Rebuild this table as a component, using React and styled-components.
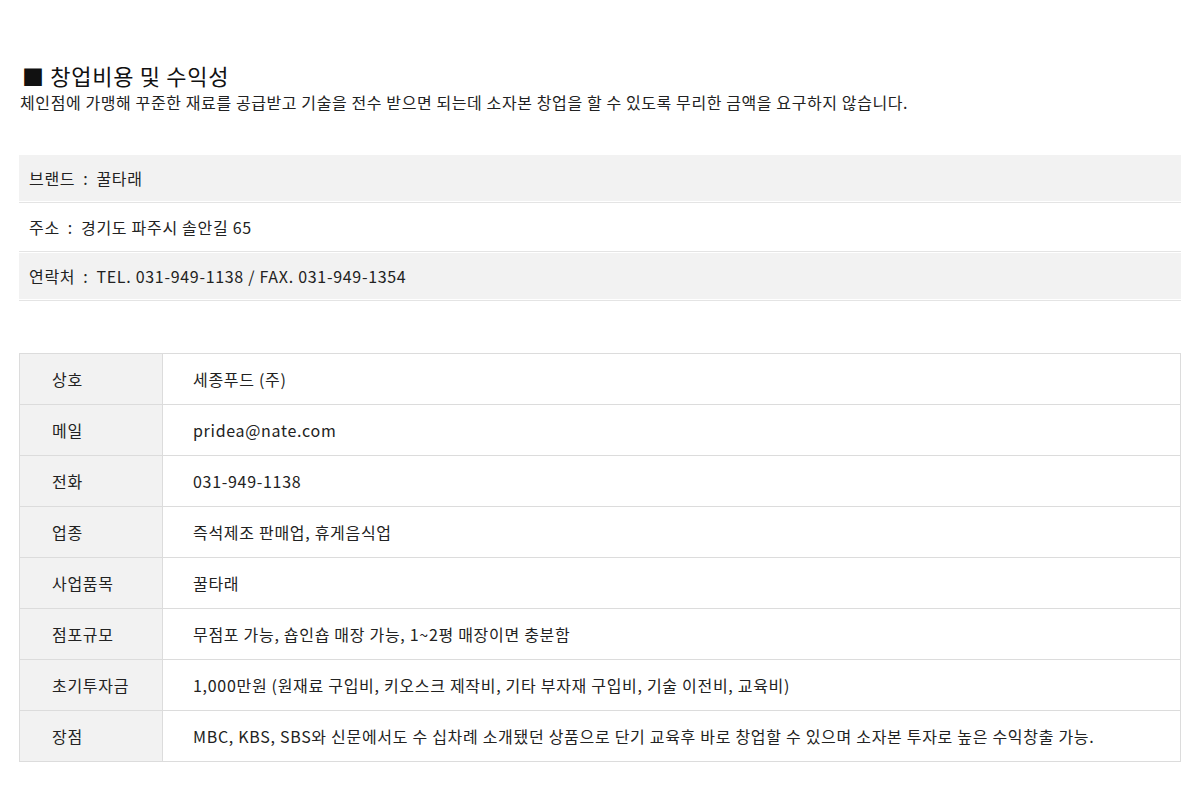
import React from "react";
import styled, { createGlobalStyle } from "styled-components";

const GlobalStyle = createGlobalStyle`
  body {
    margin: 0;
    background: #fff;
    font-family: "Noto Sans CJK KR", "Noto Sans", sans-serif;
    color: #222;
  }
`;

const info = [
  { label: "브랜드", value: "꿀타래" },
  { label: "주소", value: "경기도 파주시 솔안길 65" },
  { label: "연락처", value: "TEL. 031-949-1138 / FAX. 031-949-1354" },
];

const rows = [
  ["상호", "세종푸드 (주)"],
  ["메일", "pridea@nate.com"],
  ["전화", "031-949-1138"],
  ["업종", "즉석제조 판매업, 휴게음식업"],
  ["사업품목", "꿀타래"],
  ["점포규모", "무점포 가능, 숍인숍 매장 가능, 1~2평 매장이면 충분함"],
  ["초기투자금", "1,000만원 (원재료 구입비, 키오스크 제작비, 기타 부자재 구입비, 기술 이전비, 교육비)"],
  ["장점", "MBC, KBS, SBS와 신문에서도 수 십차례 소개됐던 상품으로 단기 교육후 바로 창업할 수 있으며 소자본 투자로 높은 수익창출 가능."],
];

const App = () => {
  return (
    <Page>
      <GlobalStyle />
      <Title>■ 창업비용 및 수익성</Title>
      <Lead>
        체인점에 가맹해 꾸준한 재료를 공급받고 기술을 전수 받으면 되는데 소자본 창업을 할 수 있도록 무리한 금액을 요구하지 않습니다.
      </Lead>
      <InfoList>
        {info.map((item, i) => (
          <InfoRow key={item.label} $shaded={i % 2 === 0}>
            {item.label}<Colon>:</Colon>{item.value}
          </InfoRow>
        ))}
      </InfoList>
      <Table>
        <tbody>
          {rows.map(([k, v]) => (
            <tr key={k}>
              <Th>{k}</Th>
              <Td>{v}</Td>
            </tr>
          ))}
        </tbody>
      </Table>
    </Page>
  );
};

const Page = styled.div`
  padding: 59px 19px 40px 19px;
`;

const Title = styled.h2`
  margin: 0 0 0 3px;
  font-size: 22px;
  font-weight: 400;
  line-height: 32px;
  color: #111;
  letter-spacing: 0.7px;
`;

const Lead = styled.p`
  margin: 0 0 0 1px;
  font-size: 16px;
  line-height: 22px;
  color: #222;
  letter-spacing: 0.6px;
`;

const InfoList = styled.ul`
  list-style: none;
  margin: 42px 0 0;
  padding: 0;
`;

const InfoRow = styled.li`
  height: 46px;
  line-height: 46px;
  padding: 0 0 1px;
  margin-bottom: 1px;
  text-indent: 10px;
  font-size: 16px;
  letter-spacing: 0.7px;
  background: ${(p) => (p.$shaded ? "#f2f2f2" : "#fff")};
  background-clip: content-box;
  border-bottom: 1px solid #e4e4e4;
`;

const Colon = styled.span`
  display: inline-block;
  text-indent: 0;
  padding: 0 8px;
`;

const Table = styled.table`
  width: 100%;
  margin-top: 52px;
  border-collapse: collapse;
  border: 1px solid #dcdcdc;
  font-size: 16px;
  letter-spacing: 0.7px;
`;

const Th = styled.th`
  width: 143px;
  height: 50px;
  padding: 0 0 0 32px;
  text-align: left;
  font-weight: 400;
  background: #f2f2f2;
  border: 1px solid #dcdcdc;
  box-sizing: border-box;
`;

const Td = styled.td`
  height: 50px;
  padding: 0 0 0 30px;
  border: 1px solid #dcdcdc;
`;

export default App;
